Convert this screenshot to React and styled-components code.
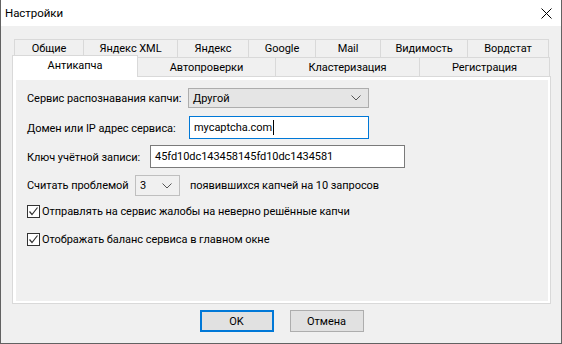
import React from 'react';
import styled, { createGlobalStyle } from 'styled-components';

const GlobalStyle = createGlobalStyle`
    html, body {
        margin: 0;
        padding: 0;
        background: #f0f0f0;
    }
    body {
        font-family: Roboto, "Liberation Sans", sans-serif;
        font-size: 11px;
        letter-spacing: -0.05px;
        color: #000;
    }
`;

const Window = styled.div`
    width: 562px;
    height: 344px;
    box-sizing: border-box;
    display: flex;
    flex-direction: column;
    border: 1px solid #626262;
    border-top: none;
    background: #f0f0f0;
`;

const TitleBar = styled.div`
    height: 26px;
    flex: none;
    display: flex;
    align-items: center;
    justify-content: space-between;
    padding: 0 9px 0 4px;
    background: #fff;
    font-size: 11.5px;
`;

const Body = styled.div`
    flex: 1;
    display: flex;
    flex-direction: column;
    padding: 13px 10px 0 11px;
`;

const TabRow = styled.div`
    display: flex;
    height: ${p => p.$height}px;
    padding-left: ${p => p.$offset}px;
`;

const Tab = styled.div`
    box-sizing: border-box;
    width: ${p => p.$width}px;
    flex: none;
    display: flex;
    align-items: center;
    justify-content: center;
    border: 1px solid #d9d9d9;
    border-bottom: none;
    margin-right: -1px;
    background: ${p => (p.$active ? '#fff' : '#f0f0f0')};
    ${p => p.$active && `
        position: relative;
        z-index: 1;
        height: 22px;
        margin-top: -2px;
        padding-bottom: 2px;
    `}
`;

const Panel = styled.div`
    box-sizing: border-box;
    height: 228px;
    border: 1px solid #d9d9d9;
    background: #fff;
    padding: 3px 2px 2px 3px;
    display: flex;
`;

const Page = styled.div`
    flex: 1;
    background: #f0f0f0;
    padding: 8px 0 0 11px;
    display: flex;
    flex-direction: column;
`;

const FormRow = styled.div`
    display: flex;
    align-items: center;
    height: ${p => p.$height}px;
    margin-bottom: ${p => p.$gap}px;
`;

const Label = styled.span`
    width: ${p => p.$width}px;
    flex: none;
    white-space: nowrap;
    padding-top: ${p => p.$shift || 0}px;
`;

const Combo = styled.div`
    box-sizing: border-box;
    width: ${p => p.$width}px;
    height: 100%;
    display: flex;
    align-items: center;
    justify-content: space-between;
    padding: 0 7px 0 4px;
    border: 1px solid ${p => (p.$flat ? '#bfbfbf' : '#adadad')};
    background: ${p => (p.$flat ? '#f0f0f0' : '#e5e5e5')};
`;

const TextBox = styled.div`
    box-sizing: border-box;
    width: ${p => p.$width}px;
    height: 100%;
    display: flex;
    align-items: center;
    padding: 0 4px 1px;
    border: 1px solid ${p => (p.$focused ? '#0078d7' : '#7a7a7a')};
    background: #fff;
    white-space: nowrap;
`;

const Caret = styled.span`
    display: inline-block;
    width: 1px;
    height: 15px;
    background: #000;
    margin-left: 1px;
`;

const Trailing = styled.span`
    margin-left: 10px;
    white-space: nowrap;
`;

const CheckRow = styled.label`
    display: flex;
    align-items: center;
    gap: 2px;
    height: 18px;
    margin-bottom: ${p => p.$gap}px;
    white-space: nowrap;
`;

const Box = styled.span`
    box-sizing: border-box;
    width: 13px;
    height: 13px;
    flex: none;
    border: 1px solid #333;
    background: #fff;
    display: flex;
    align-items: center;
    justify-content: center;
`;

const ButtonBar = styled.div`
    display: flex;
    justify-content: center;
    gap: 16px;
    padding-top: 6px;
`;

const Button = styled.button`
    box-sizing: border-box;
    width: 74px;
    height: 22px;
    padding: 0;
    font: inherit;
    color: #000;
    background: #e1e1e1;
    border: ${p => (p.$default ? '2px solid #0078d7' : '1px solid #adadad')};
`;

const Chevron = () => (
    <svg width="10" height="6" viewBox="0 0 10 6">
        <polyline points="0.5,0.5 5,5 9.5,0.5" fill="none" stroke="#555" strokeWidth="1" />
    </svg>
);

const CloseIcon = () => (
    <svg width="11" height="11" viewBox="0 0 11 11">
        <path d="M0.5 0.5 L10.5 10.5 M10.5 0.5 L0.5 10.5" stroke="#000" strokeWidth="1" />
    </svg>
);

const CheckMark = () => (
    <svg width="11" height="11" viewBox="0 0 11 11">
        <polyline points="1.5,5.5 4,8.5 9.5,1.5" fill="none" stroke="#333" strokeWidth="1.2" />
    </svg>
);

const backTabs = [
    ['Общие', 70],
    ['Яндекс XML', 95],
    ['Яндекс', 72],
    ['Google', 68],
    ['Mail', 66],
    ['Видимость', 88],
    ['Вордстат', 82],
];

const frontTabs = [
    ['Антикапча', 126],
    ['Автопроверки', 139],
    ['Кластеризация', 145],
    ['Регистрация', 131],
];

const Checkbox = ({ text, gap }) => (
    <CheckRow $gap={gap}>
        <Box><CheckMark /></Box>
        {text}
    </CheckRow>
);

class App extends React.Component {
    render() {
        return (
            <>
                <GlobalStyle />
                <Window>
                    <TitleBar>
                        <span>Настройки</span>
                        <CloseIcon />
                    </TitleBar>
                    <Body>
                        <TabRow $height={18} $offset={2}>
                            {backTabs.map(([name, w]) => (
                                <Tab key={name} $width={w}>{name}</Tab>
                            ))}
                        </TabRow>
                        <TabRow $height={19} $offset={0}>
                            {frontTabs.map(([name, w], i) => (
                                <Tab key={name} $width={w} $active={i === 0}>{name}</Tab>
                            ))}
                        </TabRow>
                        <Panel>
                            <Page>
                                <FormRow $height={20} $gap={8}>
                                    <Label $width={161}>Сервис распознавания капчи:</Label>
                                    <Combo $width={181}>
                                        Другой
                                        <Chevron />
                                    </Combo>
                                </FormRow>
                                <FormRow $height={23} $gap={6}>
                                    <Label $width={162} $shift={2}>Домен или IP адрес сервиса:</Label>
                                    <TextBox $width={180} $focused>
                                        mycaptcha.com<Caret />
                                    </TextBox>
                                </FormRow>
                                <FormRow $height={23} $gap={7}>
                                    <Label $width={123} $shift={2}>Ключ учётной записи:</Label>
                                    <TextBox $width={255}>45fd10dc143458145fd10dc1434581</TextBox>
                                </FormRow>
                                <FormRow $height={21} $gap={6}>
                                    <Label $width={108}>Считать проблемой</Label>
                                    <Combo $width={45} $flat>
                                        3
                                        <Chevron />
                                    </Combo>
                                    <Trailing>появившихся капчей на 10 запросов</Trailing>
                                </FormRow>
                                <Checkbox gap={10} text="Отправлять на сервис жалобы на неверно решённые капчи" />
                                <Checkbox gap={0} text="Отображать баланс сервиса в главном окне" />
                            </Page>
                        </Panel>
                        <ButtonBar>
                            <Button $default>OK</Button>
                            <Button>Отмена</Button>
                        </ButtonBar>
                    </Body>
                </Window>
            </>
        );
    }
}

export default App;
